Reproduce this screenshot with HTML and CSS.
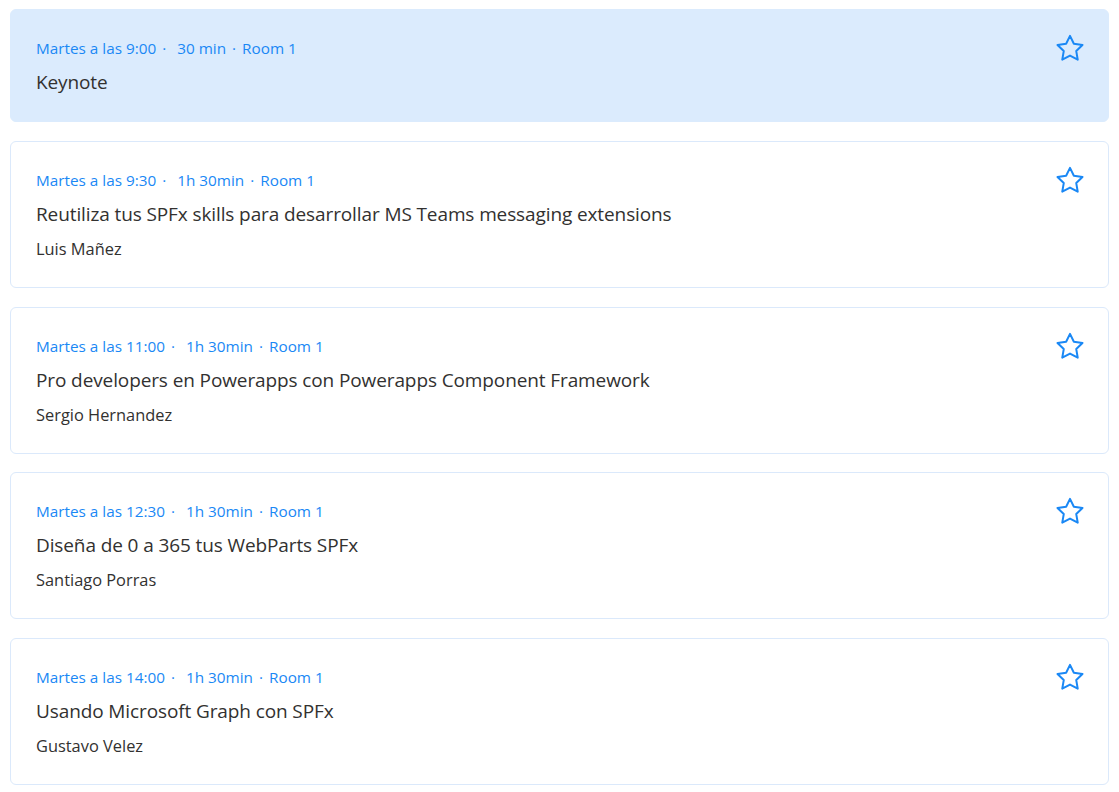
FILE: index.html
```html
<!DOCTYPE html>
<html lang="es">
<head>
<meta charset="utf-8">
<title>Agenda</title>
<link rel="stylesheet" href="styles.css">
</head>
<body>
<div class="list">
  <div class="card card--active">
    <div class="content">
      <div class="meta"><span>Martes a las 9:00</span><span class="sep">·</span><span class="dur">30 min</span><span class="sep">·</span><span>Room 1</span></div>
      <div class="title">Keynote</div>
    </div>
    <svg class="star" viewBox="0 0 24 24"><path d="M12 2.3l3.09 6.26 6.91 1.01-5 4.87 1.18 6.88L12 18.07l-6.18 3.25L7 14.44 2 9.57l6.91-1.01z"/></svg>
  </div>
  <div class="card">
    <div class="content">
      <div class="meta"><span>Martes a las 9:30</span><span class="sep">·</span><span class="dur">1h 30min</span><span class="sep">·</span><span>Room 1</span></div>
      <div class="title">Reutiliza tus SPFx skills para desarrollar MS Teams messaging extensions</div>
      <div class="speaker">Luis Mañez</div>
    </div>
    <svg class="star" viewBox="0 0 24 24"><path d="M12 2.3l3.09 6.26 6.91 1.01-5 4.87 1.18 6.88L12 18.07l-6.18 3.25L7 14.44 2 9.57l6.91-1.01z"/></svg>
  </div>
  <div class="card">
    <div class="content">
      <div class="meta"><span>Martes a las 11:00</span><span class="sep">·</span><span class="dur">1h 30min</span><span class="sep">·</span><span>Room 1</span></div>
      <div class="title">Pro developers en Powerapps con Powerapps Component Framework</div>
      <div class="speaker">Sergio Hernandez</div>
    </div>
    <svg class="star" viewBox="0 0 24 24"><path d="M12 2.3l3.09 6.26 6.91 1.01-5 4.87 1.18 6.88L12 18.07l-6.18 3.25L7 14.44 2 9.57l6.91-1.01z"/></svg>
  </div>
  <div class="card">
    <div class="content">
      <div class="meta"><span>Martes a las 12:30</span><span class="sep">·</span><span class="dur">1h 30min</span><span class="sep">·</span><span>Room 1</span></div>
      <div class="title">Diseña de 0 a 365 tus WebParts SPFx</div>
      <div class="speaker">Santiago Porras</div>
    </div>
    <svg class="star" viewBox="0 0 24 24"><path d="M12 2.3l3.09 6.26 6.91 1.01-5 4.87 1.18 6.88L12 18.07l-6.18 3.25L7 14.44 2 9.57l6.91-1.01z"/></svg>
  </div>
  <div class="card">
    <div class="content">
      <div class="meta"><span>Martes a las 14:00</span><span class="sep">·</span><span class="dur">1h 30min</span><span class="sep">·</span><span>Room 1</span></div>
      <div class="title">Usando Microsoft Graph con SPFx</div>
      <div class="speaker">Gustavo Velez</div>
    </div>
    <svg class="star" viewBox="0 0 24 24"><path d="M12 2.3l3.09 6.26 6.91 1.01-5 4.87 1.18 6.88L12 18.07l-6.18 3.25L7 14.44 2 9.57l6.91-1.01z"/></svg>
  </div>
</div>
</body>
</html>
```

FILE: styles.css
```css
* { box-sizing: border-box; }
html, body { margin: 0; padding: 0; background: #ffffff; }
body {
  font-family: "Open Sans", "Noto Sans", sans-serif;
  color: #323130;
}
.list {
  display: flex;
  flex-direction: column;
  gap: 18.75px;
  padding: 9px 10px;
}
.card {
  display: flex;
  justify-content: space-between;
  align-items: flex-start;
  border: 1px solid #dbe9fb;
  border-radius: 6px;
  background: #ffffff;
  height: 147px;
  padding: 0 23.5px 0 25px;
}
.card--active {
  background: #dbebfd;
  border-color: #dbebfd;
  height: 113px;
}
.content {
  display: flex;
  flex-direction: column;
  padding-top: 27px;
}
.meta {
  font-size: 15.3px;
  line-height: 22px;
  color: #1a88f5;
  display: flex;
  height: 22px;
}
.sep { margin: 0 6px; }
.dur { margin-left: 5px; }
.title {
  font-size: 19px;
  letter-spacing: -0.11px;
  line-height: 26px;
  margin-top: 10px;
  color: #323130;
}
.speaker {
  font-size: 16.4px;
  line-height: 22px;
  margin-top: 11px;
  color: #323130;
}
.star {
  width: 30px;
  height: 30px;
  margin-top: 23px;
  fill: none;
  stroke: #1a88f5;
  stroke-width: 1.6;
  stroke-linejoin: round;
}
```
